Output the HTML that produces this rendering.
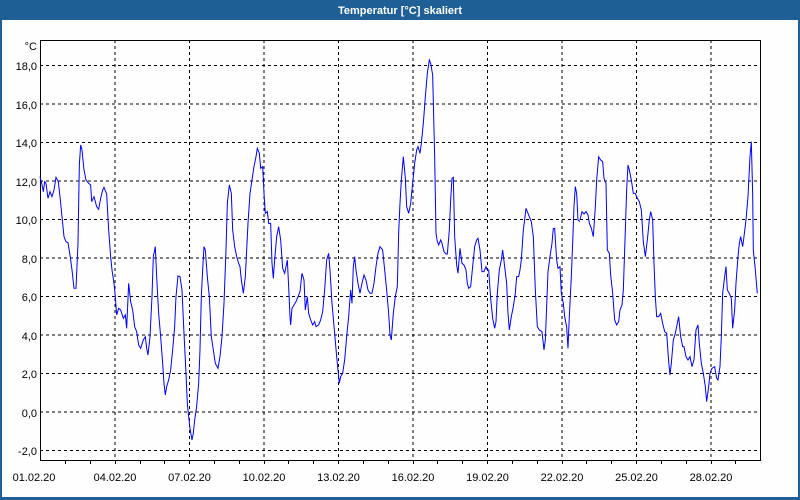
<!DOCTYPE html>
<html><head><meta charset="utf-8"><style>
html,body{margin:0;padding:0;}
body{width:800px;height:500px;position:relative;background:#fff;overflow:hidden;font-family:"Liberation Sans",sans-serif;}
</style></head><body>
<svg width="800" height="500" viewBox="0 0 800 500" xmlns="http://www.w3.org/2000/svg" style="position:absolute;left:0;top:0">
<rect x="0" y="0" width="800" height="500" fill="#fefefe"/>
<rect x="0" y="0" width="800" height="20" fill="#1e6096"/>
<rect x="0" y="20" width="2" height="480" fill="#1e6096"/>
<rect x="798" y="20" width="2" height="480" fill="#1e6096"/>
<rect x="0" y="497" width="800" height="3" fill="#1e6096"/>
<text x="400" y="14" fill="#fff" font-size="11" font-weight="bold" text-anchor="middle" font-family="Liberation Sans, sans-serif">Temperatur [°C] skaliert</text>
<g stroke="#000" stroke-width="1" stroke-dasharray="3,3" shape-rendering="crispEdges">
<path d="M40 65.5H760M40 104H760M40 142.5H760M40 181H760M40 219.5H760M40 258H760M40 296.5H760M40 335H760M40 373.5H760M40 412H760M40 450.5H760"/>
<path d="M115 40V460M189.5 40V460M264 40V460M338.5 40V460M413 40V460M487.5 40V460M562 40V460M636.5 40V460M711 40V460"/>
</g>
<g stroke="#000" stroke-width="1" fill="none" shape-rendering="crispEdges">
<path d="M40.5 40.5H760.5V460.5H40.5Z"/>
<path d="M65.5 460V464M90.5 460V464M115.5 460V464M140.5 460V464M164.5 460V464M189.5 460V464M214.5 460V464M239.5 460V464M264.5 460V464M288.5 460V464M313.5 460V464M338.5 460V464M363.5 460V464M388.5 460V464M413.5 460V464M437.5 460V464M462.5 460V464M487.5 460V464M512.5 460V464M537.5 460V464M562.5 460V464M586.5 460V464M611.5 460V464M636.5 460V464M661.5 460V464M686.5 460V464M711.5 460V464M735.5 460V464"/>
</g>
<g font-size="11" fill="#000" text-anchor="end" font-family="Liberation Sans, sans-serif">
<text x="37" y="50">°C</text>
<text x="37" y="70">18,0</text>
<text x="37" y="109">16,0</text>
<text x="37" y="147">14,0</text>
<text x="37" y="186">12,0</text>
<text x="37" y="224">10,0</text>
<text x="37" y="263">8,0</text>
<text x="37" y="301">6,0</text>
<text x="37" y="340">4,0</text>
<text x="37" y="378">2,0</text>
<text x="37" y="417">0,0</text>
<text x="37" y="455">-2,0</text>
</g>
<g font-size="11" fill="#000" text-anchor="middle" font-family="Liberation Sans, sans-serif">
<text x="34" y="481">01.02.20</text>
<text x="115" y="481">04.02.20</text>
<text x="189.5" y="481">07.02.20</text>
<text x="264" y="481">10.02.20</text>
<text x="338.5" y="481">13.02.20</text>
<text x="413" y="481">16.02.20</text>
<text x="487.5" y="481">19.02.20</text>
<text x="562" y="481">22.02.20</text>
<text x="636.5" y="481">25.02.20</text>
<text x="711" y="481">28.02.20</text>
</g>
<g fill="none" stroke="#0000ff" stroke-width="1">
<polyline transform="translate(40,50) scale(0.3333)" vector-effect="non-scaling-stroke" points="0,380 5,400 10,425 14,395 18,400 24,445 30,425 36,440 42,420 48,382 55,395 60,440 66,500 72,560 78,575 84,578 90,615 96,660 102,715 108,715 114,580 118,345 122,285 126,300 132,360 138,390 146,400 152,405 155,455 162,440 170,470 176,478 182,445 188,420 192,412 200,432 206,540 212,620 216,660 222,700 226,740 230,795 236,775 242,780 250,805 256,795 260,835 266,700 272,755 278,780 284,830 290,845 296,885 302,895 310,870 316,860 320,895 324,915 330,860 336,740 340,620 346,590 350,680 356,790 362,860 368,940 372,1000 376,1035 380,1010 386,990 392,960 398,900 404,830 408,740 414,678 420,680 426,720 432,850 438,970 442,1060 446,1100 450,1135 456,1170 460,1150 464,1110 470,1070 476,1000 480,900 484,740 488,660 492,590 496,600 502,680 508,740 514,860 520,900 526,940 534,955 540,920"/>
<polyline transform="translate(220,50) scale(0.3333)" vector-effect="non-scaling-stroke" points="0,920 6,860 12,760 18,600 22,460 28,405 34,430 38,540 44,590 50,620 56,640 60,650 64,690 70,730 76,680 80,600 84,520 90,430 96,390 102,350 108,320 112,295 118,310 122,355 128,350 132,430 136,490 142,485 146,520 152,520 156,640 160,685 164,630 170,560 176,530 182,570 188,655 194,670 200,640 202,630 206,710 210,800 212,825 216,775 222,765 228,755 234,740 240,725 246,670 252,690 256,780 262,740 266,790 272,810 278,825 284,815 288,830 296,825 302,810 308,785 314,720 320,630 326,610 330,660 336,760 344,850 350,920 354,960 358,1000 362,980 368,970 374,930 380,860 386,800 392,720 396,760 400,650 404,620 408,660 414,700 420,730 426,700 432,675 438,690 444,720 450,730 456,730 462,700 468,650 474,610 480,590 488,600 494,660 500,720 506,790 510,855 514,870 520,790 526,740 532,710 536,550 540,460"/>
<polyline transform="translate(400,50) scale(0.3333)" vector-effect="non-scaling-stroke" points="0,460 4,390 10,320 16,385 20,470 26,490 32,460 38,400 44,340 50,300 54,290 60,310 64,280 70,220 76,140 82,70 88,30 92,40 98,75 104,320 108,550 112,575 116,585 122,570 126,580 132,605 138,612 142,612 148,540 152,450 156,385 160,382 164,560 170,645 174,670 180,595 186,640 192,645 198,660 202,700 206,715 212,710 218,650 224,590 230,570 234,565 240,600 246,665 252,665 258,650 262,660 266,660 272,745 278,805 284,835 288,815 292,730 298,660 304,630 308,600 314,650 320,700 324,790 328,840 334,800 340,770 346,730 350,680 356,680 360,660 364,630 370,540 374,510 378,475 382,485 388,500 394,515 400,560 406,720 412,830 418,840 426,845 432,900 436,870 440,770 444,665 450,620 456,580 460,535 464,535 470,630 474,655 480,650 484,730 490,760 494,800 500,830 504,895 508,800 514,680 518,580 522,470 526,410 530,430 534,510 540,515"/>
<polyline transform="translate(580,50) scale(0.3333)" vector-effect="non-scaling-stroke" points="0,510 6,485 12,492 18,485 24,495 28,520 34,535 40,560 46,470 50,390 56,320 62,330 68,335 72,385 78,400 82,600 88,610 92,675 98,730 104,810 110,825 116,815 120,780 126,765 130,720 136,540 140,420 144,345 148,360 154,390 160,430 166,430 172,445 178,455 184,480 190,575 196,620 202,570 208,510 212,485 218,510 222,640 226,740 230,800 236,800 242,790 248,820 254,845 260,850 266,935 270,975 274,940 280,870 286,850 292,820 296,800 302,860 308,890 312,890 318,920 324,930 330,920 336,950 342,930 348,840 354,825 358,880 364,940 370,970 376,1010 380,1055 386,1010 390,970 396,955 404,950 410,985 414,990 420,950 424,860 428,730 434,680 438,650 442,720 448,730 454,745 458,835 464,780 468,700 474,620 478,580 482,560 488,590 492,560 498,510 504,440 510,320 514,275 518,430 520,600 526,660 532,730"/>
</g>
</svg>
</body></html>
